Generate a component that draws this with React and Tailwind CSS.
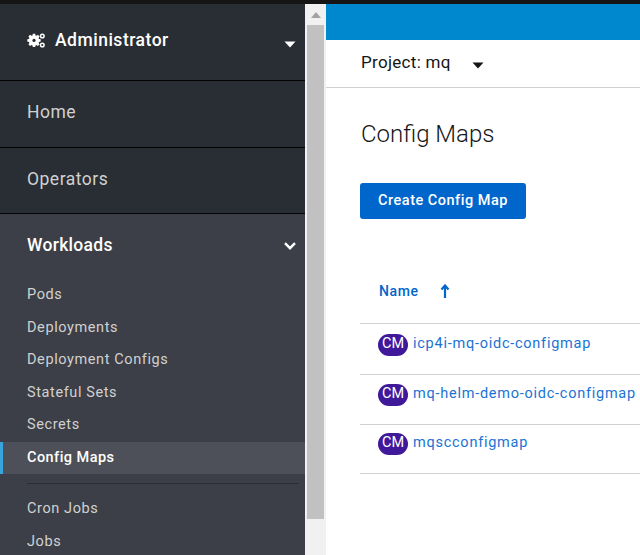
import React from 'react';

const font = { fontFamily: 'Roboto, sans-serif' };

const NavLink = ({ label, active }) => (
  <div
    className={`h-[32.5px] flex items-center pl-[27px] text-[14.5px] ${
      active
        ? 'bg-[#4d5058] border-l-[3px] border-[#39a5dc] !pl-[24px] font-medium text-white tracking-[0.45px]'
        : 'text-[#d1d1d1] tracking-[0.6px]'
    }`}
  >
    {label}
  </div>
);

const Gears = () => (
  <svg width="18" height="15" viewBox="0 0 18 15" fill="#fff">
    <path d="M5.8 1.6h2.4l.3 1.7 1 .4 1.4-1 1.7 1.7-1 1.4.4 1 1.7.3v2.4l-1.7.3-.4 1 1 1.4-1.7 1.7-1.4-1-1 .4-.3 1.7H5.800l-.3-1.700-1-.4-1.400 1-1.700-1.700 1-1.400-.4-1-1.700-.3V7.100l1.700-.3.4-1-1-1.400 1.700-1.700 1.400 1 1-.4z" transform="translate(0 -.9)" />
    <circle cx="7" cy="7.400" r="1.600" fill="#292e34" />
    <circle cx="15.300" cy="3" r="1.800" fill="none" stroke="#fff" strokeWidth="1.500" />
    <circle cx="15.300" cy="12" r="1.800" fill="none" stroke="#fff" strokeWidth="1.500" />
  </svg>
);

const Caret = ({ color = '#fff' }) => (
  <svg width="12" height="7" viewBox="0 0 12 7" fill={color}>
    <path d="M.5.5h11L6 6.500z" />
  </svg>
);

const rows = [
  { name: 'icp4i-mq-oidc-configmap', box: 'h-[51px] pt-[10px]' },
  { name: 'mq-helm-demo-oidc-configmap', box: 'h-[50px] pt-[9px]' },
  { name: 'mqscconfigmap', box: 'h-[49px] pt-[8px]' },
];

export default function App() {
  return (
    <div className="h-[555px] w-[640px] overflow-hidden flex flex-col bg-white" style={font}>
      <div className="h-[4px] bg-[#151515] shrink-0" />
      <div className="flex flex-1 min-h-0">
        {/* Sidebar */}
        <aside className="w-[305px] shrink-0 bg-[#292e34] overflow-hidden">
          <div className="h-[77px] border-b border-[#030303] flex items-center justify-between pl-[27px] pr-[9px]">
            <div className="flex items-center gap-[10px] text-white text-[17.5px] tracking-[0.5px] font-medium -mt-[3px]">
              <Gears />
              Administrator
            </div>
            <div className="mt-[4px]"><Caret /></div>
          </div>
          <div className="h-[67px] border-b border-[#030303] flex items-center pl-[27px] text-[17.5px] tracking-[0.5px] text-[#d1d1d1] pb-[3px]">Home</div>
          <div className="h-[66px] border-b border-[#030303] flex items-center pl-[27px] text-[17.5px] tracking-[0.5px] text-[#d1d1d1] pb-[3px]">Operators</div>
          <div className="bg-[#3c3f47] h-full">
            <div className="h-[63px] flex items-center justify-between pl-[27px] pr-[9px] text-white text-[17.5px] tracking-[0.3px] font-medium">
              Workloads
              <svg width="12" height="8" viewBox="0 0 12 8" fill="none" stroke="#fff" strokeWidth="2.4">
                <path d="M1 1.200l5 5 5-5" />
              </svg>
            </div>
            <div className="mt-[2px]">
              {['Pods', 'Deployments', 'Deployment Configs', 'Stateful Sets', 'Secrets'].map((l) => (
                <NavLink key={l} label={l} />
              ))}
              <NavLink label="Config Maps" active />
              <div className="h-px bg-[#292e34] ml-[27px] mr-[6px] mt-[9px] mb-[9px]" />
              <NavLink label="Cron Jobs" />
              <NavLink label="Jobs" />
            </div>
          </div>
        </aside>

        {/* Scrollbar */}
        <div className="w-[21px] shrink-0 bg-[#f1f1f1] flex flex-col items-center">
          <div className="h-[21px] flex items-center justify-center">
            <svg width="10" height="6" viewBox="0 0 10 6" fill="#a3a3a3"><path d="M5 0l5 6H0z" /></svg>
          </div>
          <div className="w-[17px] h-[494px] bg-[#c1c1c1]" />
        </div>

        {/* Main */}
        <main className="flex-1 min-w-0 overflow-hidden">
          <div className="h-[36px] bg-[#0088ce]" />
          <div className="h-[48px] border-b border-[#d1d1d1] flex items-center pl-[35px] text-[17px] tracking-[0.3px] text-[#151515]">
            <span className="-mt-[2px]">Project: mq</span>
            <div className="ml-[21px] mt-[4px]"><Caret color="#151515" /></div>
          </div>
          <div className="pl-[34px]">
            <h1 className="text-[24px] font-light text-[#151515] mt-[30px] leading-[32px] pl-px">Config Maps</h1>
            <button className="mt-[33px] w-[166px] h-[36px] bg-[#0066cc] rounded-[3px] text-white text-[14.5px] tracking-[0.5px] font-medium pb-[1px]">
              Create Config Map
            </button>
            <div className="h-[105px] border-b border-[#d1d1d1] flex items-center pl-[19px] pt-[40px] text-[14px] tracking-[0.6px] font-medium text-[#0066cc]">
              Name
              <svg className="ml-[21px]" width="10" height="14" viewBox="0 0 10 14" fill="none" stroke="#0066cc" strokeWidth="2.2">
                <path d="M5 14V2M1.500 5.500L5 1.500l3.500 4" />
              </svg>
            </div>
            {rows.map((r) => (
              <div key={r.name} className={`${r.box} border-b border-[#d1d1d1] flex items-start pl-[18px]`}>
                <span className="w-[30px] h-[22px] rounded-full bg-[#40199a] text-white text-[14.5px] flex items-center justify-center shrink-0 pb-[3px]">CM</span>
                <span className="ml-[5px] text-[14.5px] tracking-[0.75px] leading-[19px] text-[#1a73d4] whitespace-nowrap">{r.name}</span>
              </div>
            ))}
          </div>
        </main>
      </div>
    </div>
  );
}
